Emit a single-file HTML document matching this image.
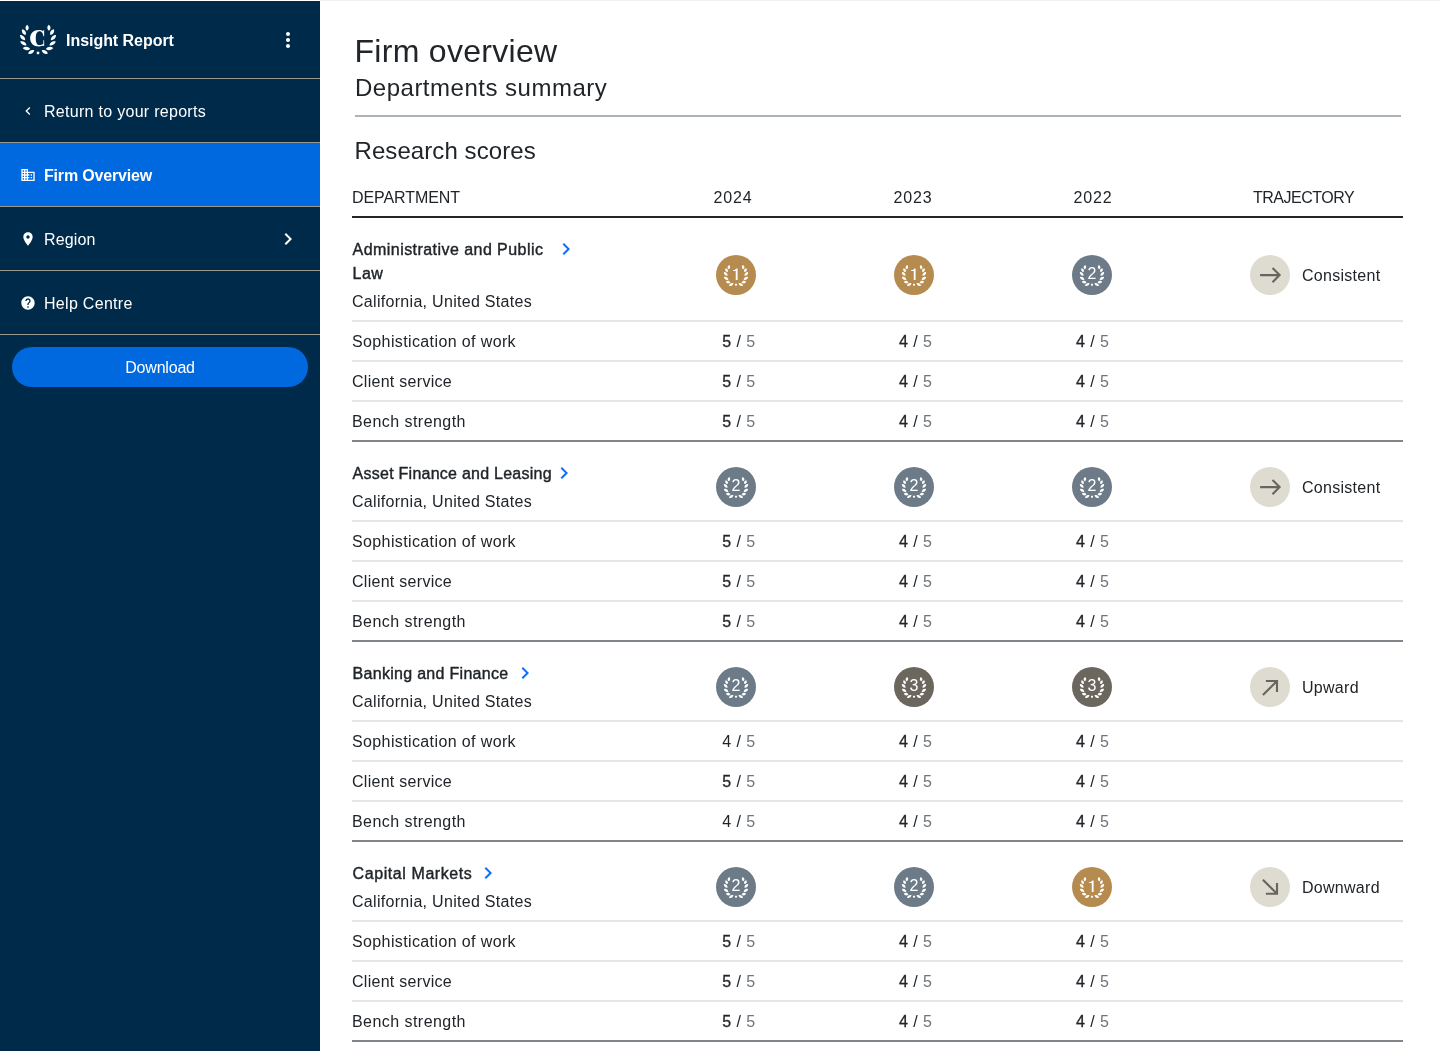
<!DOCTYPE html>
<html lang="en">
<head>
<meta charset="utf-8">
<title>Insight Report - Firm overview</title>
<style>
*{box-sizing:border-box;margin:0;padding:0}
html,body{width:1440px;height:1051px;overflow:hidden;background:#fff}
body{font-family:"Liberation Sans",sans-serif;color:#212529;position:relative;font-size:16px;line-height:20px}
#wrap{position:absolute;left:0;top:0;width:1440px;height:1051px;will-change:transform}
.a{position:absolute;white-space:nowrap}
svg{position:absolute;display:block;overflow:visible}
#side{position:absolute;left:0;top:0;width:320px;height:1051px;background:#002a4a;color:#fff}
#side .ln{position:absolute;left:0;width:320px;height:1px;background:#9a9791}
#side .lbl{position:absolute;left:44px;font-size:16px;line-height:20px;white-space:nowrap;color:#fff}
#topline{position:absolute;left:0;top:0;width:1440px;height:1px;background:linear-gradient(90deg,#fff 0,#fff 320px,#efefef 320px)}
#main{position:absolute;left:320px;top:0;width:1120px;height:1051px;background:#fff}
.h{position:absolute;white-space:nowrap;color:#212529;font-weight:400}
.hr{position:absolute;height:2px}
.th{position:absolute;white-space:nowrap;font-size:16px;line-height:20px;color:#212529}
.nm{position:absolute;left:352.6px;white-space:nowrap;font-size:16px;line-height:24px;color:#212529;-webkit-text-stroke:0.4px #212529;letter-spacing:0.42px}
.loc{position:absolute;left:352px;white-space:nowrap;font-size:16px;line-height:20px;color:#212529;letter-spacing:0.3px}
.sub{position:absolute;left:352px;white-space:nowrap;font-size:16px;line-height:20px;color:#212529}
.sc{position:absolute;white-space:nowrap;font-size:16px;line-height:20px;color:#6c757d;letter-spacing:0.45px}
.sc b{font-weight:400;color:#212529;-webkit-text-stroke:0.3px #212529}
.sc i{font-style:normal;color:#212529}
.sc u{text-decoration:none;color:#212529}
.bd{position:absolute;width:40px;height:40px;border-radius:50%}
.tr{position:absolute;left:1250px;width:40px;height:40px;border-radius:50%;background:#dedcd0}
.trl{position:absolute;left:1302px;white-space:nowrap;font-size:16px;line-height:20px;color:#212529}
</style>
</head>
<body>
<div id="wrap">
<div id="side">
<div class="ln" style="top:78px"></div>
<div class="ln" style="top:142px"></div>
<div class="ln" style="top:206px"></div>
<div class="ln" style="top:270px"></div>
<div class="ln" style="top:334px"></div>
<div class="a" style="left:0;top:143px;width:320px;height:63px;background:#0069e0"></div>
<svg style="left:14px;top:18px" width="50" height="44" viewBox="14 18 50 44" fill="#fff"><g><path transform="translate(27.10,27.85) rotate(3.0)" d="M0,-3.00C2.20,-1.35 2.20,1.35 0,3.00C-2.20,1.35 -2.20,-1.35 0,-3.00Z"/><path transform="translate(23.90,32.20) rotate(-32.0)" d="M0,-3.35C2.20,-1.51 2.20,1.51 0,3.35C-2.20,1.51 -2.20,-1.51 0,-3.35Z"/><path transform="translate(22.60,37.70) rotate(-45.0)" d="M0,-3.65C2.13,-1.64 2.13,1.64 0,3.65C-2.13,1.64 -2.13,-1.64 0,-3.65Z"/><path transform="translate(23.40,43.40) rotate(-60.0)" d="M0,-3.65C2.13,-1.64 2.13,1.64 0,3.65C-2.13,1.64 -2.13,-1.64 0,-3.65Z"/><path transform="translate(26.50,48.50) rotate(-83.0)" d="M0,-3.70C2.20,-1.67 2.20,1.67 0,3.70C-2.20,1.67 -2.20,-1.67 0,-3.70Z"/><path transform="translate(31.20,51.90) rotate(-118.0)" d="M0,-3.55C2.20,-1.60 2.20,1.60 0,3.55C-2.20,1.60 -2.20,-1.60 0,-3.55Z"/></g><g transform="translate(76,0) scale(-1,1)"><path transform="translate(27.10,27.85) rotate(3.0)" d="M0,-3.00C2.20,-1.35 2.20,1.35 0,3.00C-2.20,1.35 -2.20,-1.35 0,-3.00Z"/><path transform="translate(23.90,32.20) rotate(-32.0)" d="M0,-3.35C2.20,-1.51 2.20,1.51 0,3.35C-2.20,1.51 -2.20,-1.51 0,-3.35Z"/><path transform="translate(22.60,37.70) rotate(-45.0)" d="M0,-3.65C2.13,-1.64 2.13,1.64 0,3.65C-2.13,1.64 -2.13,-1.64 0,-3.65Z"/><path transform="translate(23.40,43.40) rotate(-60.0)" d="M0,-3.65C2.13,-1.64 2.13,1.64 0,3.65C-2.13,1.64 -2.13,-1.64 0,-3.65Z"/><path transform="translate(26.50,48.50) rotate(-83.0)" d="M0,-3.70C2.20,-1.67 2.20,1.67 0,3.70C-2.20,1.67 -2.20,-1.67 0,-3.70Z"/><path transform="translate(31.20,51.90) rotate(-118.0)" d="M0,-3.55C2.20,-1.60 2.20,1.60 0,3.55C-2.20,1.60 -2.20,-1.60 0,-3.55Z"/></g><rect x="36.75" y="51.7" width="2.5" height="2.5"/><path d="M43.3,31.3C42.2,30.4 40.7,29.93 38.9,29.93C33.6,29.93 30.12,33.4 30.12,38.2C30.12,43 33.6,46.47 38.9,46.47C40.8,46.47 42.4,46.1 43.35,45.6L43.35,46.05L44.15,46.05L44.15,40.2L43.35,40.2L43.35,43.8C42.4,44.6 41,45 39.4,45C37.1,45 35.78,43 35.78,38.2C35.78,33.4 37.1,31.3 39.6,31.3C41.6,31.3 42.9,32.9 43.4,36.2L44.15,36.2L44.15,30.1L43.45,30.1Z"/></svg>
<div class="lbl" style="left:66px;top:31px;font-weight:700;letter-spacing:-0.04px">Insight Report</div>
<svg style="left:276px;top:28px" width="24" height="24" viewBox="0 0 24 24" fill="#fff"><path d="M12 8c1.1 0 2-.9 2-2s-.9-2-2-2-2 .9-2 2 .9 2 2 2zm0 2c-1.1 0-2 .9-2 2s.9 2 2 2 2-.9 2-2-.9-2-2-2zm0 6c-1.1 0-2 .9-2 2s.9 2 2 2 2-.9 2-2-.9-2-2-2z"/></svg>
<div class="lbl" style="top:102px;letter-spacing:0.29px">Return to your reports</div>
<div class="lbl" style="top:166px;font-weight:700;letter-spacing:-0.18px">Firm Overview</div>
<div class="lbl" style="top:230px;letter-spacing:0.12px">Region</div>
<div class="lbl" style="top:294px;letter-spacing:0.3px">Help Centre</div>
<svg style="left:20px;top:103px" width="16" height="16" viewBox="0 0 24 24" fill="#fff"><path d="M15.41 7.41L14 6l-6 6 6 6 1.41-1.41L10.83 12z"/></svg>
<svg style="left:20px;top:167px" width="16" height="16" viewBox="0 0 24 24" fill="#fff"><path d="M12 7V3H2v18h20V7H12zM6 19H4v-2h2v2zm0-4H4v-2h2v2zm0-4H4V9h2v2zm0-4H4V5h2v2zm4 12H8v-2h2v2zm0-4H8v-2h2v2zm0-4H8V9h2v2zm0-4H8V5h2v2zm10 12h-8v-2h2v-2h-2v-2h2v-2h-2V9h8v10zm-2-8h-2v2h2v-2zm0 4h-2v2h2v-2z"/></svg>
<svg style="left:20px;top:231px" width="16" height="16" viewBox="0 0 24 24" fill="#fff"><path d="M12 2C8.13 2 5 5.13 5 9c0 5.25 7 13 7 13s7-7.75 7-13c0-3.87-3.13-7-7-7zm0 9.5c-1.38 0-2.5-1.12-2.5-2.5s1.12-2.5 2.5-2.5 2.5 1.12 2.5 2.5-1.12 2.5-2.5 2.5z"/></svg>
<svg style="left:20px;top:295px" width="16" height="16" viewBox="0 0 24 24" fill="#fff"><path d="M12 2C6.48 2 2 6.48 2 12s4.48 10 10 10 10-4.48 10-10S17.52 2 12 2zm1 17h-2v-2h2v2zm2.07-7.75l-.9.92C13.45 12.9 13 13.5 13 15h-2v-.5c0-1.1.45-2.1 1.17-2.83l1.24-1.26c.37-.36.59-.86.59-1.41 0-1.1-.9-2-2-2s-2 .9-2 2H8c0-2.21 1.79-4 4-4s4 1.79 4 4c0 .88-.36 1.68-.93 2.25z"/></svg>
<svg style="left:276px;top:227px" width="24" height="24" viewBox="0 0 24 24" fill="#fff"><path d="M10 6L8.59 7.41 13.17 12l-4.58 4.59L10 18l6-6z"/></svg>
<div class="a" style="left:12px;top:347px;width:296px;height:40px;border-radius:20px;background:#0069e0;text-align:center;line-height:41px;font-size:16px;color:#fff;letter-spacing:-0.2px">Download</div>
</div>
<div id="main"></div>
<svg width="0" height="0" style="left:0;top:0"><defs><g id="lw" fill="#fff"><g><path transform="translate(12.90,12.07) rotate(6.0)" d="M0,-2.15C1.73,-0.97 1.73,0.97 0,2.15C-1.73,0.97 -1.73,-0.97 0,-2.15Z"/><path transform="translate(10.57,15.13) rotate(-28.0)" d="M0,-2.20C1.73,-0.99 1.73,0.99 0,2.20C-1.73,0.99 -1.73,-0.99 0,-2.20Z"/><path transform="translate(9.71,18.98) rotate(-45.0)" d="M0,-2.65C1.67,-1.19 1.67,1.19 0,2.65C-1.67,1.19 -1.67,-1.19 0,-2.65Z"/><path transform="translate(10.14,23.40) rotate(-58.0)" d="M0,-2.60C1.67,-1.17 1.67,1.17 0,2.60C-1.67,1.17 -1.67,-1.17 0,-2.60Z"/><path transform="translate(12.14,27.10) rotate(-80.0)" d="M0,-2.30C1.73,-1.03 1.73,1.03 0,2.30C-1.73,1.03 -1.73,-1.03 0,-2.30Z"/><path transform="translate(15.27,29.54) rotate(-118.0)" d="M0,-2.55C1.67,-1.15 1.67,1.15 0,2.55C-1.67,1.15 -1.67,-1.15 0,-2.55Z"/></g><g transform="translate(40,0) scale(-1,1)"><path transform="translate(12.90,12.07) rotate(6.0)" d="M0,-2.15C1.73,-0.97 1.73,0.97 0,2.15C-1.73,0.97 -1.73,-0.97 0,-2.15Z"/><path transform="translate(10.57,15.13) rotate(-28.0)" d="M0,-2.20C1.73,-0.99 1.73,0.99 0,2.20C-1.73,0.99 -1.73,-0.99 0,-2.20Z"/><path transform="translate(9.71,18.98) rotate(-45.0)" d="M0,-2.65C1.67,-1.19 1.67,1.19 0,2.65C-1.67,1.19 -1.67,-1.19 0,-2.65Z"/><path transform="translate(10.14,23.40) rotate(-58.0)" d="M0,-2.60C1.67,-1.17 1.67,1.17 0,2.60C-1.67,1.17 -1.67,-1.17 0,-2.60Z"/><path transform="translate(12.14,27.10) rotate(-80.0)" d="M0,-2.30C1.73,-1.03 1.73,1.03 0,2.30C-1.73,1.03 -1.73,-1.03 0,-2.30Z"/><path transform="translate(15.27,29.54) rotate(-118.0)" d="M0,-2.55C1.67,-1.15 1.67,1.15 0,2.55C-1.67,1.15 -1.67,-1.15 0,-2.55Z"/></g><rect x="19" y="28.8" width="2" height="1.8"/></g></defs></svg>
<div class="h" style="left:354.5px;top:32px;font-size:32px;line-height:38px;letter-spacing:0.3px">Firm overview</div>
<div class="h" style="left:355px;top:73px;font-size:24px;line-height:29px;letter-spacing:0.5px">Departments summary</div>
<div class="hr" style="left:355px;top:115px;width:1046px;background:#adb4b9"></div>
<div class="h" style="left:354.5px;top:136px;font-size:24px;line-height:29px;letter-spacing:0.08px">Research scores</div>
<div class="th" style="left:352px;top:188px;letter-spacing:-0.07px">DEPARTMENT</div>
<div class="th" style="left:713.6px;top:188px;letter-spacing:0.85px">2024</div>
<div class="th" style="left:893.6px;top:188px;letter-spacing:0.85px">2023</div>
<div class="th" style="left:1073.6px;top:188px;letter-spacing:0.85px">2022</div>
<div class="th" style="left:1253px;top:188px;letter-spacing:-0.5px">TRAJECTORY</div>
<div class="hr" style="left:352px;top:216px;width:1051px;background:#212529"></div>
<div class="nm" style="top:238px;letter-spacing:0.445px">Administrative and Public</div>
<div class="nm" style="top:262px;letter-spacing:0.445px">Law</div>
<svg style="left:554px;top:237px" width="24" height="24" viewBox="0 0 24 24" fill="#0d6efd"><path d="M10 6L8.59 7.41 13.17 12l-4.58 4.59L10 18l6-6z"/></svg>
<div class="loc" style="top:292px">California, United States</div>
<svg style="left:716px;top:255px" width="40" height="40" viewBox="0 0 40 40"><circle cx="20" cy="20" r="20" fill="#b58b4f"/><use href="#lw"/><path fill="#fff" d="M21.6,13.6V24.95H19.75V16H17.2V15L18.7,14.95C19.4,14.7 20,14.2 20.4,13.6Z"/></svg>
<svg style="left:894px;top:255px" width="40" height="40" viewBox="0 0 40 40"><circle cx="20" cy="20" r="20" fill="#b58b4f"/><use href="#lw"/><path fill="#fff" d="M21.6,13.6V24.95H19.75V16H17.2V15L18.7,14.95C19.4,14.7 20,14.2 20.4,13.6Z"/></svg>
<svg style="left:1072px;top:255px" width="40" height="40" viewBox="0 0 40 40"><circle cx="20" cy="20" r="20" fill="#6c7b87"/><use href="#lw"/><text x="20" y="24.1" text-anchor="middle" font-family="Liberation Sans" font-size="16" fill="#fff">2</text></svg>
<svg style="left:1250px;top:255px" width="40" height="40" viewBox="0 0 40 40"><circle cx="20" cy="20" r="20" fill="#dedcd0"/><g fill="none" stroke="#66665e" stroke-width="2.1" stroke-linejoin="miter" stroke-linecap="butt"><path d="M10.1 20.1H29.6M22.5 13.1L29.6 20.1L22.5 27.2"/></g></svg>
<div class="trl" style="top:266px;letter-spacing:0.28px">Consistent</div>
<div class="hr" style="left:352px;top:320px;width:1051px;background:#e3e6e7"></div>
<div class="sub" style="top:332px;letter-spacing:0.38px">Sophistication of work</div>
<div class="sc" style="left:722.3px;top:332px"><b>5</b> <u>/</u> 5</div>
<div class="sc" style="left:899px;top:332px"><b>4</b> <u>/</u> 5</div>
<div class="sc" style="left:1076px;top:332px"><b>4</b> <u>/</u> 5</div>
<div class="hr" style="left:352px;top:360px;width:1051px;background:#e3e6e7"></div>
<div class="sub" style="top:372px;letter-spacing:0.28px">Client service</div>
<div class="sc" style="left:722.3px;top:372px"><b>5</b> <u>/</u> 5</div>
<div class="sc" style="left:899px;top:372px"><b>4</b> <u>/</u> 5</div>
<div class="sc" style="left:1076px;top:372px"><b>4</b> <u>/</u> 5</div>
<div class="hr" style="left:352px;top:400px;width:1051px;background:#e3e6e7"></div>
<div class="sub" style="top:412px;letter-spacing:0.45px">Bench strength</div>
<div class="sc" style="left:722.3px;top:412px"><b>5</b> <u>/</u> 5</div>
<div class="sc" style="left:899px;top:412px"><b>4</b> <u>/</u> 5</div>
<div class="sc" style="left:1076px;top:412px"><b>4</b> <u>/</u> 5</div>
<div class="hr" style="left:352px;top:440px;width:1051px;background:#80868b"></div>
<div class="nm" style="top:462px;letter-spacing:0.25px">Asset Finance and Leasing</div>
<svg style="left:552.4px;top:461px" width="24" height="24" viewBox="0 0 24 24" fill="#0d6efd"><path d="M10 6L8.59 7.41 13.17 12l-4.58 4.59L10 18l6-6z"/></svg>
<div class="loc" style="top:492px">California, United States</div>
<svg style="left:716px;top:467px" width="40" height="40" viewBox="0 0 40 40"><circle cx="20" cy="20" r="20" fill="#6c7b87"/><use href="#lw"/><text x="20" y="24.1" text-anchor="middle" font-family="Liberation Sans" font-size="16" fill="#fff">2</text></svg>
<svg style="left:894px;top:467px" width="40" height="40" viewBox="0 0 40 40"><circle cx="20" cy="20" r="20" fill="#6c7b87"/><use href="#lw"/><text x="20" y="24.1" text-anchor="middle" font-family="Liberation Sans" font-size="16" fill="#fff">2</text></svg>
<svg style="left:1072px;top:467px" width="40" height="40" viewBox="0 0 40 40"><circle cx="20" cy="20" r="20" fill="#6c7b87"/><use href="#lw"/><text x="20" y="24.1" text-anchor="middle" font-family="Liberation Sans" font-size="16" fill="#fff">2</text></svg>
<svg style="left:1250px;top:467px" width="40" height="40" viewBox="0 0 40 40"><circle cx="20" cy="20" r="20" fill="#dedcd0"/><g fill="none" stroke="#66665e" stroke-width="2.1" stroke-linejoin="miter" stroke-linecap="butt"><path d="M10.1 20.1H29.6M22.5 13.1L29.6 20.1L22.5 27.2"/></g></svg>
<div class="trl" style="top:478px;letter-spacing:0.28px">Consistent</div>
<div class="hr" style="left:352px;top:520px;width:1051px;background:#e3e6e7"></div>
<div class="sub" style="top:532px;letter-spacing:0.38px">Sophistication of work</div>
<div class="sc" style="left:722.3px;top:532px"><b>5</b> <u>/</u> 5</div>
<div class="sc" style="left:899px;top:532px"><b>4</b> <u>/</u> 5</div>
<div class="sc" style="left:1076px;top:532px"><b>4</b> <u>/</u> 5</div>
<div class="hr" style="left:352px;top:560px;width:1051px;background:#e3e6e7"></div>
<div class="sub" style="top:572px;letter-spacing:0.28px">Client service</div>
<div class="sc" style="left:722.3px;top:572px"><b>5</b> <u>/</u> 5</div>
<div class="sc" style="left:899px;top:572px"><b>4</b> <u>/</u> 5</div>
<div class="sc" style="left:1076px;top:572px"><b>4</b> <u>/</u> 5</div>
<div class="hr" style="left:352px;top:600px;width:1051px;background:#e3e6e7"></div>
<div class="sub" style="top:612px;letter-spacing:0.45px">Bench strength</div>
<div class="sc" style="left:722.3px;top:612px"><b>5</b> <u>/</u> 5</div>
<div class="sc" style="left:899px;top:612px"><b>4</b> <u>/</u> 5</div>
<div class="sc" style="left:1076px;top:612px"><b>4</b> <u>/</u> 5</div>
<div class="hr" style="left:352px;top:640px;width:1051px;background:#80868b"></div>
<div class="nm" style="top:662px;letter-spacing:0.29px">Banking and Finance</div>
<svg style="left:513.2px;top:661px" width="24" height="24" viewBox="0 0 24 24" fill="#0d6efd"><path d="M10 6L8.59 7.41 13.17 12l-4.58 4.59L10 18l6-6z"/></svg>
<div class="loc" style="top:692px">California, United States</div>
<svg style="left:716px;top:667px" width="40" height="40" viewBox="0 0 40 40"><circle cx="20" cy="20" r="20" fill="#6c7b87"/><use href="#lw"/><text x="20" y="24.1" text-anchor="middle" font-family="Liberation Sans" font-size="16" fill="#fff">2</text></svg>
<svg style="left:894px;top:667px" width="40" height="40" viewBox="0 0 40 40"><circle cx="20" cy="20" r="20" fill="#6b675f"/><use href="#lw"/><text x="20" y="24.1" text-anchor="middle" font-family="Liberation Sans" font-size="16" fill="#fff">3</text></svg>
<svg style="left:1072px;top:667px" width="40" height="40" viewBox="0 0 40 40"><circle cx="20" cy="20" r="20" fill="#6b675f"/><use href="#lw"/><text x="20" y="24.1" text-anchor="middle" font-family="Liberation Sans" font-size="16" fill="#fff">3</text></svg>
<svg style="left:1250px;top:667px" width="40" height="40" viewBox="0 0 40 40"><circle cx="20" cy="20" r="20" fill="#dedcd0"/><g fill="none" stroke="#66665e" stroke-width="2.1" stroke-linejoin="miter" stroke-linecap="butt"><path d="M15.9 14H27V25M27 14L12.9 27.9"/></g></svg>
<div class="trl" style="top:678px;letter-spacing:0.28px">Upward</div>
<div class="hr" style="left:352px;top:720px;width:1051px;background:#e3e6e7"></div>
<div class="sub" style="top:732px;letter-spacing:0.38px">Sophistication of work</div>
<div class="sc" style="left:722.3px;top:732px"><i>4</i> <u>/</u> 5</div>
<div class="sc" style="left:899px;top:732px"><b>4</b> <u>/</u> 5</div>
<div class="sc" style="left:1076px;top:732px"><b>4</b> <u>/</u> 5</div>
<div class="hr" style="left:352px;top:760px;width:1051px;background:#e3e6e7"></div>
<div class="sub" style="top:772px;letter-spacing:0.28px">Client service</div>
<div class="sc" style="left:722.3px;top:772px"><b>5</b> <u>/</u> 5</div>
<div class="sc" style="left:899px;top:772px"><b>4</b> <u>/</u> 5</div>
<div class="sc" style="left:1076px;top:772px"><b>4</b> <u>/</u> 5</div>
<div class="hr" style="left:352px;top:800px;width:1051px;background:#e3e6e7"></div>
<div class="sub" style="top:812px;letter-spacing:0.45px">Bench strength</div>
<div class="sc" style="left:722.3px;top:812px"><i>4</i> <u>/</u> 5</div>
<div class="sc" style="left:899px;top:812px"><b>4</b> <u>/</u> 5</div>
<div class="sc" style="left:1076px;top:812px"><b>4</b> <u>/</u> 5</div>
<div class="hr" style="left:352px;top:840px;width:1051px;background:#80868b"></div>
<div class="nm" style="top:862px;letter-spacing:0.58px">Capital Markets</div>
<svg style="left:475.7px;top:861px" width="24" height="24" viewBox="0 0 24 24" fill="#0d6efd"><path d="M10 6L8.59 7.41 13.17 12l-4.58 4.59L10 18l6-6z"/></svg>
<div class="loc" style="top:892px">California, United States</div>
<svg style="left:716px;top:867px" width="40" height="40" viewBox="0 0 40 40"><circle cx="20" cy="20" r="20" fill="#6c7b87"/><use href="#lw"/><text x="20" y="24.1" text-anchor="middle" font-family="Liberation Sans" font-size="16" fill="#fff">2</text></svg>
<svg style="left:894px;top:867px" width="40" height="40" viewBox="0 0 40 40"><circle cx="20" cy="20" r="20" fill="#6c7b87"/><use href="#lw"/><text x="20" y="24.1" text-anchor="middle" font-family="Liberation Sans" font-size="16" fill="#fff">2</text></svg>
<svg style="left:1072px;top:867px" width="40" height="40" viewBox="0 0 40 40"><circle cx="20" cy="20" r="20" fill="#b58b4f"/><use href="#lw"/><path fill="#fff" d="M21.6,13.6V24.95H19.75V16H17.2V15L18.7,14.95C19.4,14.7 20,14.2 20.4,13.6Z"/></svg>
<svg style="left:1250px;top:867px" width="40" height="40" viewBox="0 0 40 40"><circle cx="20" cy="20" r="20" fill="#dedcd0"/><g fill="none" stroke="#66665e" stroke-width="2.1" stroke-linejoin="miter" stroke-linecap="butt"><path d="M27 15.9V26.8H15.9M27 26.8L12.9 12.8"/></g></svg>
<div class="trl" style="top:878px;letter-spacing:0.28px">Downward</div>
<div class="hr" style="left:352px;top:920px;width:1051px;background:#e3e6e7"></div>
<div class="sub" style="top:932px;letter-spacing:0.38px">Sophistication of work</div>
<div class="sc" style="left:722.3px;top:932px"><b>5</b> <u>/</u> 5</div>
<div class="sc" style="left:899px;top:932px"><b>4</b> <u>/</u> 5</div>
<div class="sc" style="left:1076px;top:932px"><b>4</b> <u>/</u> 5</div>
<div class="hr" style="left:352px;top:960px;width:1051px;background:#e3e6e7"></div>
<div class="sub" style="top:972px;letter-spacing:0.28px">Client service</div>
<div class="sc" style="left:722.3px;top:972px"><b>5</b> <u>/</u> 5</div>
<div class="sc" style="left:899px;top:972px"><b>4</b> <u>/</u> 5</div>
<div class="sc" style="left:1076px;top:972px"><b>4</b> <u>/</u> 5</div>
<div class="hr" style="left:352px;top:1000px;width:1051px;background:#e3e6e7"></div>
<div class="sub" style="top:1012px;letter-spacing:0.45px">Bench strength</div>
<div class="sc" style="left:722.3px;top:1012px"><b>5</b> <u>/</u> 5</div>
<div class="sc" style="left:899px;top:1012px"><b>4</b> <u>/</u> 5</div>
<div class="sc" style="left:1076px;top:1012px"><b>4</b> <u>/</u> 5</div>
<div class="hr" style="left:352px;top:1040px;width:1051px;background:#80868b"></div>
<div id="topline"></div>
</div>
</body>
</html>
